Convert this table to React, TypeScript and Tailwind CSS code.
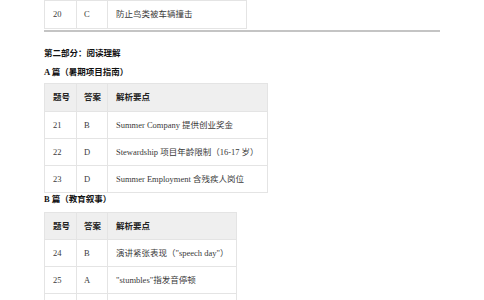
const font = { fontFamily: '"Liberation Serif", "Noto Sans CJK SC", serif' };

type Row = { id: string; no: string; ans: string; note: string };

function Table({ cols, rows, headH, rowH }: { cols: string; rows: Row[]; headH: string; rowH: string }) {
  return (
    <div className="border border-[#e4e4e4] w-fit">
      <div className={`grid ${cols} ${headH} bg-[#efefef] text-[#222] font-bold`}>
        <div className="flex items-center pl-[8px] border-r border-[#e4e4e4]">题号</div>
        <div className="flex items-center pl-[7px] border-r border-[#e4e4e4]">答案</div>
        <div className="flex items-center pl-[8px]">解析要点</div>
      </div>
      {rows.map((r) => (
        <div key={r.id} className={`grid ${cols} ${rowH} text-[#3a3a3a] border-t border-[#e4e4e4]`}>
          <div className="flex items-center pl-[8px] border-r border-[#e4e4e4]">{r.no}</div>
          <div className="flex items-center pl-[7px] border-r border-[#e4e4e4]">{r.ans}</div>
          <div className="flex items-center pl-[8px] whitespace-nowrap">{r.note}</div>
        </div>
      ))}
    </div>
  );
}

export default function App() {
  return (
    <div className="w-[484px] h-[300px] overflow-hidden bg-white text-[8.5px] leading-none" style={font}>
      <div className="pl-[44px] w-[440px]">
        {/* tail of previous table */}
        <div className="grid grid-cols-[32px_31px_138px] h-[29px] border border-[#e4e4e4] w-fit text-[#3a3a3a]">
          <div className="flex items-center pl-[8px] border-r border-[#e4e4e4]">20</div>
          <div className="flex items-center pl-[7px] border-r border-[#e4e4e4]">C</div>
          <div className="flex items-center pl-[8px]">防止鸟类被车辆撞击</div>
        </div>
        <div className="h-[2px] bg-[#c4c4c4] mt-px" />

        <div className="h-[12px]" />
        <div className="h-[19px] flex items-center font-bold text-[#111]">第二部分：阅读理解</div>
        <div className="h-[19px] flex items-center font-bold text-[#111]">A 篇（暑期项目指南）</div>
        <div className="mt-px">
          <Table
            cols="grid-cols-[32px_31px_159px]"
            headH="h-[27px]"
            rowH="h-[27px]"
            rows={[
              { id: '21', no: '21', ans: 'B', note: 'Summer Company 提供创业奖金' },
              { id: '22', no: '22', ans: 'D', note: 'Stewardship 项目年龄限制（16-17 岁）' },
              { id: '23', no: '23', ans: 'D', note: 'Summer Employment 含残疾人岗位' },
            ]}
          />
        </div>

        <div className="h-[13px] flex items-center font-bold text-[#111]">B 篇（教育叙事）</div>
        <div className="mt-[6px]">
          <Table
            cols="grid-cols-[32px_31px_128px]"
            headH="h-[26px]"
            rowH="h-[27px]"
            rows={[
              { id: '24', no: '24', ans: 'B', note: '演讲紧张表现（"speech day"）' },
              { id: '25', no: '25', ans: 'A', note: '"stumbles"指发音停顿' },
              { id: '26', no: '', ans: '', note: '' },
            ]}
          />
        </div>
      </div>
    </div>
  );
}
